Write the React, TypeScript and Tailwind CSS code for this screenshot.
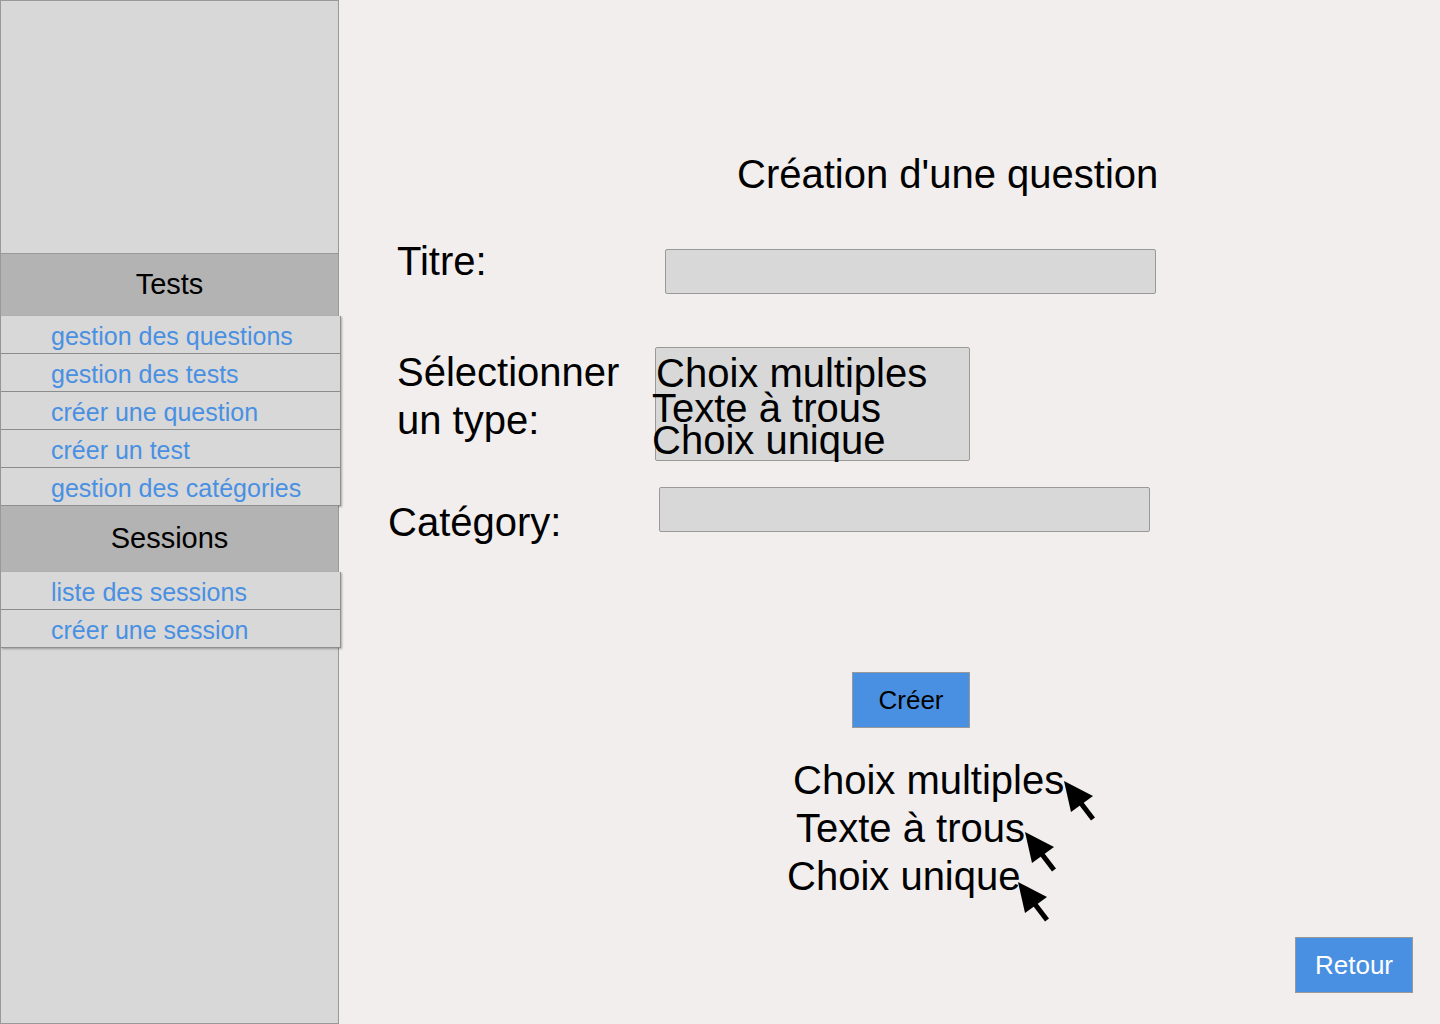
const font = "font-['Liberation_Sans',Arial,sans-serif]";

const testLinks = [
  "gestion des questions",
  "gestion des tests",
  "créer une question",
  "créer un test",
  "gestion des catégories",
];

const sessionLinks = ["liste des sessions", "créer une session"];

function SideLink({ label }: { label: string }) {
  return (
    <div className="w-[340px] h-[38px] shrink-0 flex items-center pl-[50px] pt-[4px] bg-[#d8d8d8] border-b border-r border-[#8f8f8f] shadow-[1px_1px_2px_rgba(0,0,0,0.3)] text-[25px] text-[#4a90e2]">
      {label}
    </div>
  );
}

function Cursor() {
  return (
    <svg width="32" height="40" viewBox="0 0 32 40" className="shrink-0">
      <polygon points="0,0 29,15 7,31" fill="#000" />
      <line x1="16" y1="21" x2="29" y2="38" stroke="#000" strokeWidth="5" />
    </svg>
  );
}

function Sidebar() {
  return (
    <aside className="w-[339px] h-[1024px] shrink-0 flex flex-col bg-[#d8d8d8] border border-[#999]">
      <div className="h-[252px] shrink-0" />
      <div className="h-[63px] shrink-0 flex items-center justify-center bg-[#b3b3b3] border-t border-[#999] text-[29px] text-black">
        Tests
      </div>
      {testLinks.map((l) => (
        <SideLink key={l} label={l} />
      ))}
      <div className="h-[66px] shrink-0 flex items-center justify-center bg-[#b3b3b3] text-[29px] text-black">
        Sessions
      </div>
      {sessionLinks.map((l) => (
        <SideLink key={l} label={l} />
      ))}
    </aside>
  );
}

export default function App() {
  return (
    <div className={`${font} flex w-[1440px] h-[1024px] bg-[#f1eeed] overflow-hidden text-black`}>
      <Sidebar />
      <main className="flex-1 flex flex-col pt-[150px]">
        <h1 className="shrink-0 ml-[398px] text-[40px] leading-[48px] font-normal">
          Création d'une question
        </h1>

        {/* titre */}
        <div className="shrink-0 flex items-start mt-[39px]">
          <div className="ml-[58px] w-[268px] text-[40px] leading-[48px]">Titre:</div>
          <div className="mt-[12px] w-[491px] h-[45px] bg-[#d8d8d8] border border-[#999] rounded-[2px]" />
        </div>

        {/* type */}
        <div className="shrink-0 flex items-start mt-[53px]">
          <div className="ml-[58px] w-[258px] mt-[1px] text-[40px] leading-[48px]">
            Sélectionner
            <br />
            un type:
          </div>
          <div className="w-[315px] h-[114px] bg-[#d8d8d8] border border-[#999] rounded-[2px] pt-[9px] text-[40px] leading-[33px] whitespace-nowrap">
            <div className="h-[33px]">Choix multiples</div>
            <div className="h-[33px] mt-[2px] ml-[-4px]">Texte à trous</div>
            <div className="h-[33px] mt-[-1px] ml-[-4px]">Choix unique</div>
          </div>
        </div>

        {/* categorie */}
        <div className="shrink-0 flex items-start mt-[26px]">
          <div className="ml-[49px] w-[271px] mt-[11px] text-[40px] leading-[48px]">Catégory:</div>
          <div className="w-[491px] h-[45px] bg-[#d8d8d8] border border-[#999] rounded-[2px]" />
        </div>

        <button className="shrink-0 self-start ml-[513px] mt-[126px] w-[118px] h-[56px] bg-[#4a90e2] border border-[#999] text-[26px] text-black">
          Créer
        </button>

        <div className="shrink-0 mt-[28px] flex flex-col text-[40px] leading-[48px] whitespace-nowrap">
          <div className="flex items-start h-[48px] ml-[454px]">
            <span>Choix multiples</span>
            <div className="h-[48px] pt-[25px]">
              <Cursor />
            </div>
          </div>
          <div className="flex items-start h-[48px] ml-[457px]">
            <span>Texte à trous</span>
            <div className="h-[48px] pt-[28px]">
              <Cursor />
            </div>
          </div>
          <div className="flex items-start h-[48px] ml-[448px]">
            <span>Choix unique</span>
            <div className="h-[48px] pt-[30px] ml-[-3px]">
              <Cursor />
            </div>
          </div>
        </div>

        <button className="shrink-0 self-end mr-[27px] mt-[37px] w-[118px] h-[56px] bg-[#4a90e2] border border-[#999] text-[26px] text-white">
          Retour
        </button>
      </main>
    </div>
  );
}
